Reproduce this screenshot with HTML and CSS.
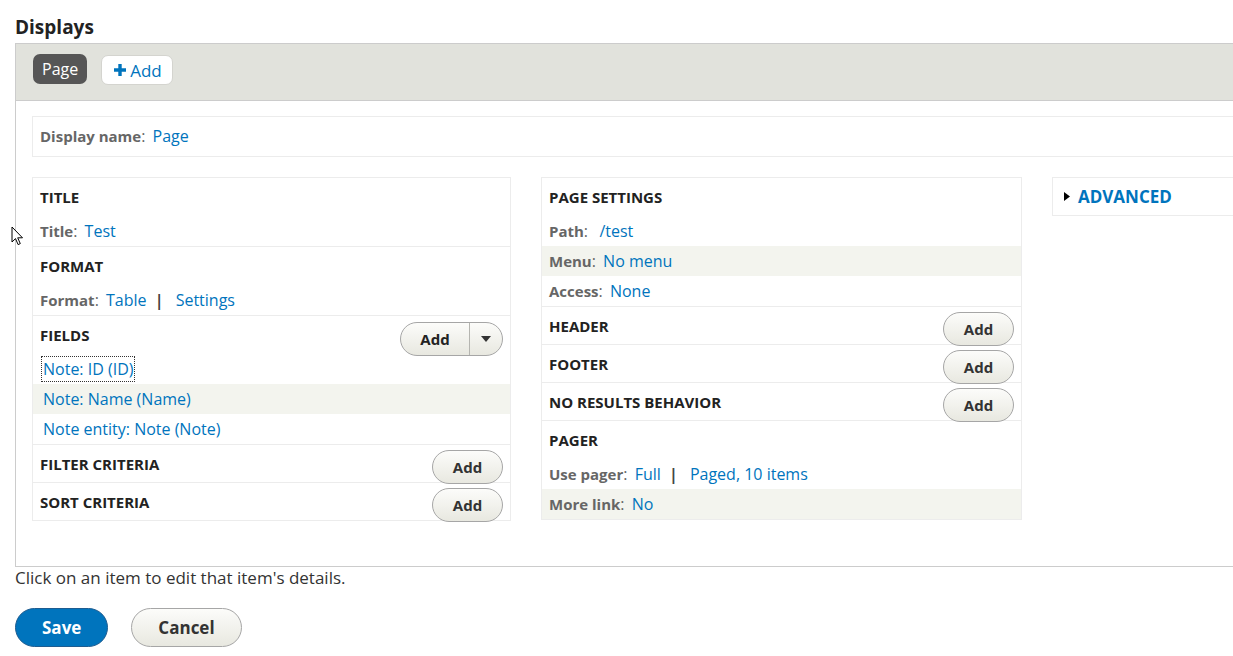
FILE: index.html
```html
<!DOCTYPE html>
<html>

<head>
  <meta charset="UTF-8">
  <title>Displays</title>
  <link rel="stylesheet" href="styles.css">
</head>

<body>
  <div class="page">
    <h2 class="page-title">Displays</h2>

    <div class="displays">
      <div class="tabs">
        <span class="tab active">Page</span>
        <a class="tab add-display" href="#">
          <svg width="12" height="12" viewBox="0 0 12 12"><path d="M4.3 0h3.4v4.3H12v3.4H7.7V12H4.3V7.7H0V4.3h4.3z" fill="#0074bd"/></svg>
          Add
        </a>
      </div>

      <div class="display-body">
        <div class="display-name">
          <span class="label">Display name</span><span class="colon">:</span> <a href="#">Page</a>
        </div>

        <div class="columns">
          <!-- first column -->
          <div class="column">
            <div class="bucket">
              <h3>Title</h3>
              <div class="row"><span class="label">Title</span><span class="colon">:</span> <a href="#">Test</a></div>
            </div>
            <div class="bucket">
              <h3>Format</h3>
              <div class="row"><span class="label">Format</span><span class="colon">:</span> <a href="#">Table</a> <span class="sep">|</span> <a href="#">Settings</a></div>
            </div>
            <div class="bucket">
              <h3>Fields
                <span class="dropbutton">
                  <span class="drop-main">Add</span>
                  <span class="drop-toggle"><svg width="10" height="6" viewBox="0 0 10 6"><path d="M0 0h10L5 6z" fill="#333"/></svg></span>
                </span>
              </h3>
              <div class="row field"><a href="#" class="focused">Note: ID (ID)</a></div>
              <div class="row field odd"><a href="#">Note: Name (Name)</a></div>
              <div class="row field"><a href="#">Note entity: Note (Note)</a></div>
            </div>
            <div class="bucket">
              <h3 class="with-button">Filter criteria <button class="add-btn">Add</button></h3>
            </div>
            <div class="bucket">
              <h3 class="with-button">Sort criteria <button class="add-btn">Add</button></h3>
            </div>
          </div>

          <!-- second column -->
          <div class="column">
            <div class="bucket">
              <h3>Page settings</h3>
              <div class="row"><span class="label">Path</span><span class="colon">:</span> <a href="#">&nbsp;/test</a></div>
              <div class="row odd"><span class="label">Menu</span><span class="colon">:</span> <a href="#">No menu</a></div>
              <div class="row"><span class="label">Access</span><span class="colon">:</span> <a href="#">None</a></div>
            </div>
            <div class="bucket">
              <h3 class="with-button">Header <button class="add-btn">Add</button></h3>
            </div>
            <div class="bucket">
              <h3 class="with-button">Footer <button class="add-btn">Add</button></h3>
            </div>
            <div class="bucket">
              <h3 class="with-button">No results behavior <button class="add-btn">Add</button></h3>
            </div>
            <div class="bucket">
              <h3>Pager</h3>
              <div class="row"><span class="label">Use pager</span><span class="colon">:</span> <a href="#">Full</a> <span class="sep">|</span> <a href="#">Paged, 10 items</a></div>
              <div class="row odd"><span class="label">More link</span><span class="colon">:</span> <a href="#">No</a></div>
            </div>
          </div>

          <!-- third column -->
          <div class="column-plain">
            <div class="advanced">
              <svg width="6" height="9" viewBox="0 0 6 9"><path d="M0 0l6 4.5L0 9z" fill="#000"/></svg>
              <a href="#">Advanced</a>
            </div>
          </div>
        </div>
      </div>
    </div>

    <p class="help">Click on an item to edit that item's details.</p>

    <div class="actions">
      <button class="btn primary">Save</button>
      <button class="btn">Cancel</button>
    </div>
  </div>

  <svg class="cursor" width="13" height="20" viewBox="0 0 13 20"><path d="M1 1v15l3.5-3.4 2.6 6 2.2-1-2.6-5.8H11.5z" fill="#fff" stroke="#000" stroke-width="1"/></svg>
</body>

</html>
```

FILE: styles.css
```css
html,
body {
  overflow: hidden;
}

body {
  margin: 0;
  font-family: "Open Sans", "Noto Sans", sans-serif;
  font-size: 16px;
  color: #333;
  background-color: #fff;
}

a {
  color: #0074bd;
  text-decoration: none;
}

.page {
  padding: 0 0 0 15px;
  width: 1340px;
}

.page-title {
  margin: 0 0 4px;
  padding-top: 15px;
  font-size: 19px;
  line-height: 24px;
  font-weight: bold;
  color: #222;
}

/* displays box */
.displays {
  border: 1px solid #ccc;
  border-right: none;
}

.tabs {
  display: flex;
  gap: 14px;
  align-items: flex-start;
  height: 57px;
  box-sizing: border-box;
  padding: 10px 17px;
  background-color: #e1e2dc;
  border-bottom: 1px solid #ccc;
}

.tab {
  display: inline-flex;
  align-items: center;
  height: 30px;
  padding: 0 9px;
  border-radius: 7px;
  font-size: 16px;
  box-sizing: border-box;
}

.tab.active {
  background-color: #565656;
  color: #fff;
}

.tab.add-display {
  height: 30px;
  margin-top: 1px;
  padding: 0 10px 0 12px;
  gap: 4px;
  background-color: #fff;
  border: 1px solid #d4d4cf;
  font-size: 17px;
}

.display-body {
  padding: 15px 16px 45px;
}

.display-name {
  height: 41px;
  box-sizing: border-box;
  border: 1px solid #ececec;
  padding: 0 7px;
  line-height: 39px;
}

.label {
  font-weight: bold;
  font-size: 15px;
  color: #666;
}

.colon {
  color: #666;
  margin-right: 3px;
}

.sep {
  color: #444;
  font-weight: bold;
  margin: 0 8px 0 4px;
}

.columns {
  display: grid;
  grid-template-columns: 479px 481px 1fr;
  gap: 30px;
  align-items: start;
  margin-top: 20px;
}

.column {
  border: 1px solid #ececec;
  border-bottom: none;
}

.bucket {
  border-bottom: 1px solid #ececec;
}

.bucket h3 {
  display: flex;
  justify-content: space-between;
  align-items: flex-start;
  margin: 0;
  height: 38px;
  padding: 0 7px;
  font-size: 15px;
  line-height: 38px;
  text-transform: uppercase;
  color: #222;
}

.bucket h3.with-button {
  height: 37px;
}

.row {
  height: 30px;
  line-height: 30px;
  padding: 0 7px;
}

.row.odd {
  background-color: #f3f4ee;
}

.row.field {
  padding-left: 10px;
}

.focused {
  outline: 1px dotted #333;
  outline-offset: 1px;
}

/* buttons */
.add-btn {
  width: 71px;
  height: 34px;
  margin: 5px 0 0 0;
  border: 1px solid #a6a6a6;
  border-radius: 20px;
  background: linear-gradient(#fcfcfa, #e8e8e0);
  font-family: inherit;
  font-size: 15px;
  font-weight: bold;
  color: #333;
  cursor: pointer;
}

.dropbutton {
  display: flex;
  height: 34px;
  box-sizing: border-box;
  margin: 6px 0 0 0;
  border: 1px solid #a6a6a6;
  border-radius: 20px;
  background: linear-gradient(#fcfcfa, #e8e8e0);
  line-height: 32px;
}

.drop-main {
  width: 68px;
  text-align: center;
  border-right: 1px solid #b5b5b0;
  text-transform: none;
}

.drop-toggle {
  display: flex;
  align-items: center;
  justify-content: center;
  width: 32px;
}

.advanced {
  display: flex;
  align-items: center;
  gap: 8px;
  height: 39px;
  box-sizing: border-box;
  border: 1px solid #ececec;
  border-right: none;
  padding-left: 11px;
}

.advanced a {
  font-size: 17px;
  font-weight: bold;
  text-transform: uppercase;
}

.help {
  margin: 1px 0 0;
  font-size: 17px;
  line-height: 20px;
  color: #333;
}

.actions {
  display: flex;
  gap: 23px;
  margin-top: 20px;
}

.btn {
  height: 39px;
  padding: 0 26px;
  border: 1px solid #a6a6a6;
  border-radius: 20px;
  background: linear-gradient(#fcfcfa, #e8e8e0);
  font-family: inherit;
  font-size: 17px;
  font-weight: bold;
  color: #333;
}

.btn.primary {
  background: #0074bd;
  border-color: #1e5c90;
  color: #fff;
}

.cursor {
  position: absolute;
  left: 11px;
  top: 226px;
}
```
